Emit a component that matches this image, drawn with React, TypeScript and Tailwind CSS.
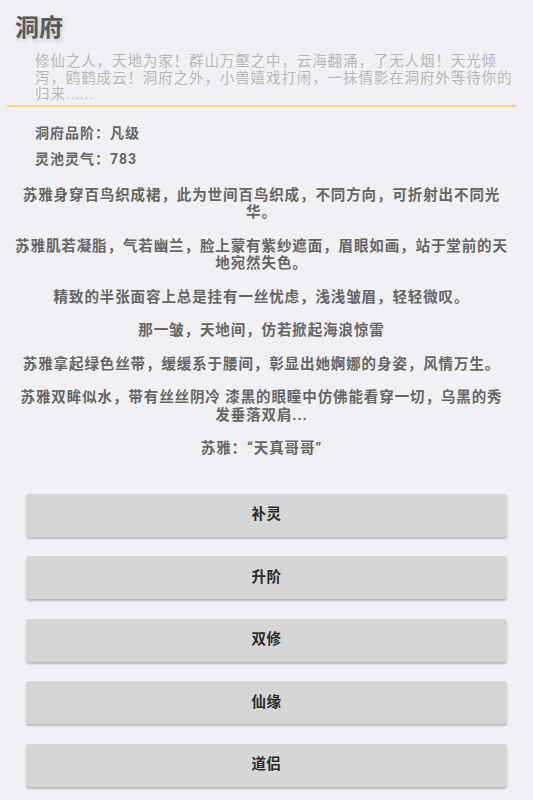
import type { ReactNode } from "react";

const story = [
  "苏雅身穿百鸟织成裙，此为世间百鸟织成，不同方向，可折射出不同光华。",
  "苏雅肌若凝脂，气若幽兰，脸上蒙有紫纱遮面，眉眼如画，站于堂前的天地宛然失色。",
  "精致的半张面容上总是挂有一丝忧虑，浅浅皱眉，轻轻微叹。",
  "那一皱，天地间，仿若掀起海浪惊雷",
  "苏雅拿起绿色丝带，缓缓系于腰间，彰显出她婀娜的身姿，风情万生。",
  "苏雅双眸似水，带有丝丝阴冷 漆黑的眼瞳中仿佛能看穿一切，乌黑的秀发垂落双肩...",
  "苏雅：“天真哥哥”",
];

const actions = ["补灵", "升阶", "双修", "仙缘", "道侣"];

function ActionButton({ children }: { children: ReactNode }) {
  return (
    <button
      type="button"
      className="flex h-[43px] w-full items-center justify-center rounded-[3px] bg-[#d5d6d6] text-[14.5px] font-bold tracking-[0.5px] text-[#2a2a2a] shadow-[0_2px_2px_rgba(0,0,0,0.22)]"
    >
      {children}
    </button>
  );
}

export default function App() {
  return (
    <div
      className="min-h-[800px] w-full bg-[#f1f0f5] pb-6"
      style={{ fontFamily: 'Roboto, "Noto Sans CJK SC", sans-serif' }}
    >
      <header>
        <h1 className="pl-[15px] pt-[12px] text-[24px] font-bold leading-[32px] text-[#5a5a5a] [text-shadow:1px_2px_4px_rgba(0,0,0,0.18)]">
          洞府
        </h1>
        <p className="mt-[10px] pl-[35px] pr-[13px] text-[14.5px] leading-[16.5px] tracking-[0.9px] text-[#b8b7bc]">
          修仙之人，天地为家！群山万壑之中，云海翻涌，了无人烟！天光倾泻，鸥鹤成云！洞府之外，小兽嬉戏打闹，一抹倩影在洞府外等待你的归来......
        </p>
        <div className="ml-[7px] mr-[17px] mt-[1px] h-[2px] bg-[#f8d48e]" />
      </header>

      <section className="mt-[13px] pl-[35px] text-[14px] font-bold leading-[26px] tracking-[1px] text-[#666]">
        <p>洞府品阶：凡级</p>
        <p>灵池灵气：783</p>
      </section>

      <section className="mt-[15px] flex flex-col gap-[16px] pl-[14px] pr-[24px] text-center text-[14.5px] font-bold leading-[17.5px] tracking-[0.9px] text-[#666]">
        {story.map((line) => (
          <p key={line}>{line}</p>
        ))}
      </section>

      <nav className="mx-[26px] mt-[36px] flex flex-col gap-[19.5px]">
        {actions.map((label) => (
          <ActionButton key={label}>{label}</ActionButton>
        ))}
      </nav>
    </div>
  );
}
